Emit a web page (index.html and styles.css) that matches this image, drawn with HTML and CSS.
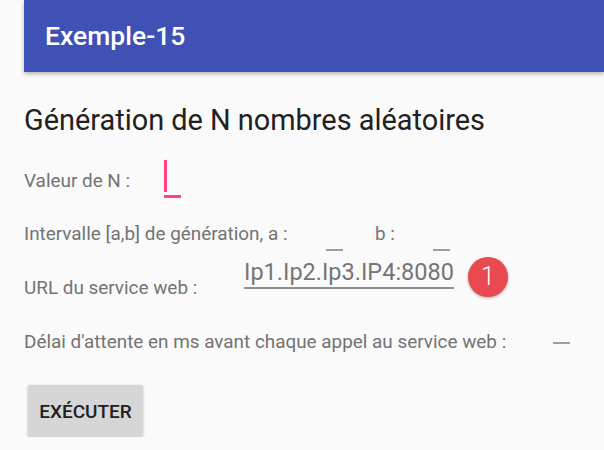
FILE: index.html
```html
<!DOCTYPE html>
<html lang="fr">
<head>
<meta charset="utf-8">
<title>Exemple-15</title>
<link rel="stylesheet" href="styles.css">
</head>
<body>
<header class="appbar"><h1 class="appbar-title">Exemple-15</h1></header>
<main class="content">
  <h2 class="heading">Génération de N nombres aléatoires</h2>
  <div class="row row-n">
    <span class="label label-n">Valeur de N :</span>
    <span class="field-focus"><span class="cursor"></span></span>
  </div>
  <div class="row row-ab">
    <span class="label label-a">Intervalle [a,b] de génération, a :</span>
    <span class="field-empty"></span>
    <span class="label label-b">b :</span>
    <span class="field-empty"></span>
  </div>
  <div class="row row-url">
    <span class="label label-url">URL du service web :</span>
    <span class="field-url">Ip1.Ip2.Ip3.IP4:8080</span>
    <span class="badge">1</span>
  </div>
  <div class="row row-delay">
    <span class="label label-delay">Délai d'attente en ms avant chaque appel au service web :</span>
    <span class="dash"></span>
  </div>
  <button class="btn">EXÉCUTER</button>
</main>
</body>
</html>
```
FILE: styles.css
```css
html, body {
  margin: 0;
  padding: 0;
  background: #fafafa;
  font-family: Roboto, "Noto Sans", sans-serif;
}
.appbar {
  margin-left: 24px;
  height: 72px;
  background: #3f51b5;
  box-shadow: 0 2px 4px rgba(0,0,0,0.28);
  display: flex;
  align-items: center;
}
.appbar-title {
  margin: 0 0 0 21px;
  color: #fff;
  font-size: 26.5px;
  font-weight: 500;
  line-height: 32px;
}
.content {
  padding-left: 24px;
}
.heading {
  margin: 30px 0 0 0;
  font-size: 28.9px;
  font-weight: 400;
  line-height: 36px;
  color: #212121;
}
.row {
  display: flex;
  align-items: flex-start;
}
.label {
  font-size: 18.9px;
  line-height: 24px;
  color: #737373;
  white-space: nowrap;
}
.row-n { margin-top: 22px; height: 40px; }
.label-n { width: 140px; margin-top: 9px; }
.field-focus {
  width: 17px;
  height: 35px;
  border-bottom: 3px solid #ff4081;
}
.cursor {
  display: block;
  width: 2.5px;
  height: 32px;
  background: #ff4081;
}
.row-ab { margin-top: 22px; }
.label-a { width: 302px; }
.label-b { width: 58px; margin-left: 32px; }
.field-empty {
  width: 17px;
  height: 27px;
  border-bottom: 2px solid #9e9e9e;
}
.row-url { margin-top: 6px; height: 40px; }
.label-url { width: 220px; margin-top: 19px; }
.field-url {
  width: 210px;
  font-size: 23.5px;
  line-height: 30px;
  color: #757575;
  border-bottom: 2px solid #8e8e8e;
  white-space: nowrap;
}
.badge {
  margin-left: 14px;
  width: 40px;
  height: 40px;
  border-radius: 50%;
  background: #e84a4f;
  color: #fff;
  font-size: 25px;
  font-weight: 300;
  line-height: 40px;
  text-align: center;
  box-shadow: 0 1px 3px rgba(0,0,0,0.3);
}
.row-delay { margin-top: 33px; }
.label-delay { width: 529px; }
.dash {
  width: 17px;
  height: 2px;
  margin-top: 12px;
  background: #9e9e9e;
}
.btn {
  display: block;
  margin: 31px 0 0 4px;
  width: 115px;
  height: 52px;
  border: none;
  border-radius: 3px;
  background: #d6d6d6;
  box-shadow: 0 1px 3px rgba(0,0,0,0.25);
  font-family: Roboto, "Noto Sans", sans-serif;
  font-size: 19px;
  font-weight: 500;
  color: #212121;
  padding: 0;
}
```
